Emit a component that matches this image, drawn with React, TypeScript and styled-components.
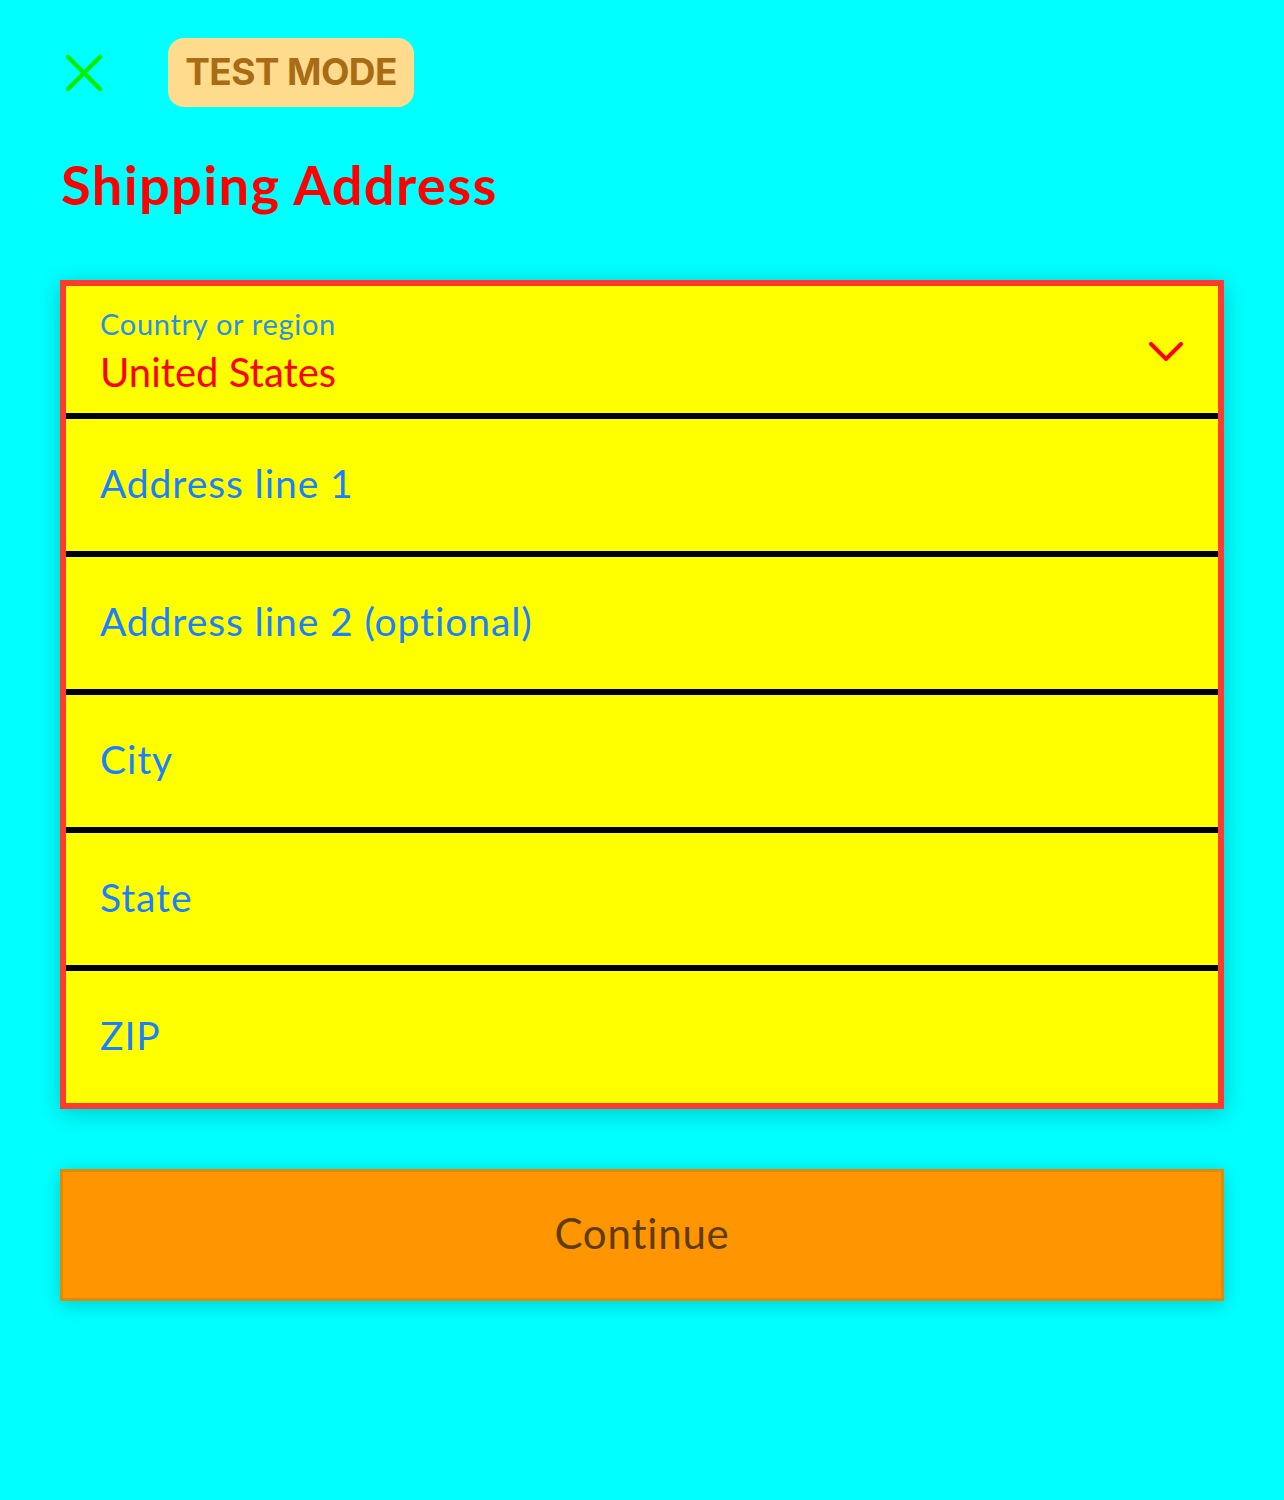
import React from "react";
import styled, { createGlobalStyle } from "styled-components";

const Global = createGlobalStyle`
  html, body { margin: 0; padding: 0; background: #00ffff; }
  body { font-family: "Lato", "Noto Sans", sans-serif; }
  * { box-sizing: border-box; }
`;

const Page = styled.div`
  width: 1284px;
  min-height: 1500px;
  background: #00ffff;
  padding: 38px 60px 0 60px;
`;

const TopBar = styled.div`
  display: flex;
  align-items: center;
  height: 69px;
`;

const CloseButton = styled.button`
  width: 44px;
  height: 44px;
  margin-left: 2px;
  padding: 0;
  border: none;
  background: transparent;
  display: flex;
  align-items: center;
  justify-content: center;
`;

const Badge = styled.div`
  margin-left: 62px;
  height: 69px;
  width: 246px;
  border-radius: 16px;
  background: #ffdb8e;
  color: #a96b13;
  font-family: "Inter", "Roboto", sans-serif;
  font-weight: 700;
  font-size: 37px;
  letter-spacing: -0.6px;
  display: flex;
  align-items: center;
  justify-content: center;
  padding-bottom: 2px;
`;

const Title = styled.h1`
  margin: 46px 0 0 1px;
  font-family: "Lato", sans-serif;
  font-weight: 700;
  font-size: 54px;
  letter-spacing: 1.5px;
  line-height: 64px;
  color: #ff0000;
`;

const Card = styled.div`
  margin-top: 63px;
  border: 6px solid #ff3b30;
  background: #ffff00;
  box-shadow: 0 4px 22px rgba(0, 0, 0, 0.22);
  display: flex;
  flex-direction: column;
`;

const Row = styled.div<{ $h: number; $last?: boolean }>`
  height: ${(p) => p.$h}px;
  border-bottom: ${(p) => (p.$last ? "none" : "6px solid #000")};
  padding: 0 34px;
  display: flex;
  align-items: center;
  justify-content: space-between;
`;

const SelectText = styled.div`
  align-self: flex-start;
  display: flex;
  flex-direction: column;
  padding-top: 21px;
`;

const SmallLabel = styled.div`
  font-size: 29px;
  letter-spacing: 0.7px;
  line-height: 34px;
  color: #2b8fe6;
`;

const SelectValue = styled.div`
  font-size: 40px;
  line-height: 48px;
  color: #ff0000;
  margin-top: 7px;
`;

const Placeholder = styled.div`
  font-size: 39px;
  letter-spacing: 0.9px;
  line-height: 48px;
  color: #1a80ff;
  margin-bottom: 5px;
`;

const Chevron = styled.svg`
  margin-right: 1px;
  margin-top: 4px;
`;

const ContinueButton = styled.button`
  margin-top: 60px;
  width: 100%;
  height: 132px;
  border: 3px solid #e08a0b;
  background: #ff9500;
  box-shadow: 0 4px 18px rgba(0, 0, 0, 0.2);
  color: #5e3c02;
  font-family: "Lato", sans-serif;
  font-size: 42px;
  letter-spacing: 0.8px;
  display: flex;
  align-items: center;
  justify-content: center;
  padding: 0 0 4px 0;
`;

const fields = ["Address line 1", "Address line 2 (optional)", "City", "State", "ZIP"];

export default function App() {
  return (
    <>
      <Global />
      <Page>
        <TopBar>
          <CloseButton aria-label="Close">
            <svg width="40" height="40" viewBox="0 0 40 40">
              <path d="M4 4 L36 36 M36 4 L4 36" stroke="#00ee00" strokeWidth="4.5" strokeLinecap="round" fill="none" />
            </svg>
          </CloseButton>
          <Badge>TEST MODE</Badge>
        </TopBar>
        <Title>Shipping Address</Title>
        <Card>
          <Row $h={133}>
            <SelectText>
              <SmallLabel>Country or region</SmallLabel>
              <SelectValue>United States</SelectValue>
            </SelectText>
            <Chevron width="34" height="20" viewBox="0 0 34 20">
              <path d="M2 2 L17 17 L32 2" stroke="#ff0000" strokeWidth="4" strokeLinecap="round" strokeLinejoin="round" fill="none" />
            </Chevron>
          </Row>
          {fields.map((f, i) => (
            <Row key={f} $h={i === fields.length - 1 ? 132 : 138} $last={i === fields.length - 1}>
              <Placeholder>{f}</Placeholder>
            </Row>
          ))}
        </Card>
        <ContinueButton>Continue</ContinueButton>
      </Page>
    </>
  );
}
